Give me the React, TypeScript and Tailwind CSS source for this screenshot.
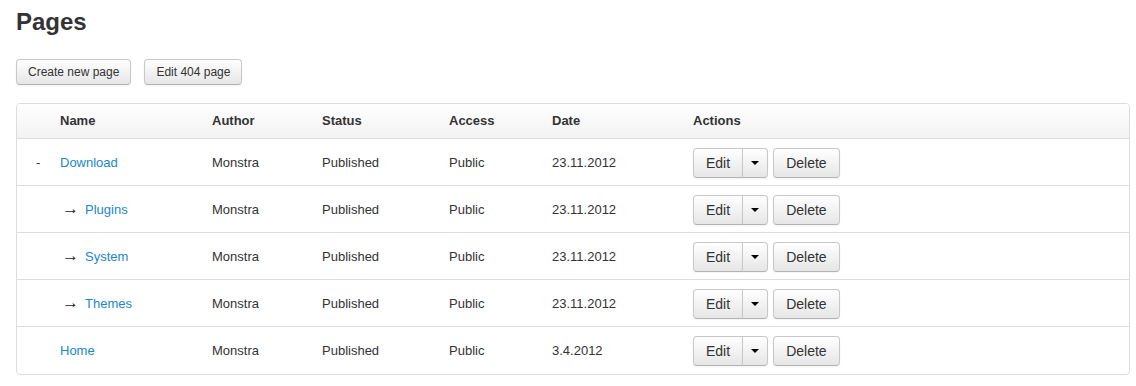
import { useState } from "react";

type PageRow = {
  name: string;
  level: "root" | "parent" | "child";
  author: string;
  status: string;
  access: string;
  date: string;
};

const pages: PageRow[] = [
  { name: "Download", level: "parent", author: "Monstra", status: "Published", access: "Public", date: "23.11.2012" },
  { name: "Plugins", level: "child", author: "Monstra", status: "Published", access: "Public", date: "23.11.2012" },
  { name: "System", level: "child", author: "Monstra", status: "Published", access: "Public", date: "23.11.2012" },
  { name: "Themes", level: "child", author: "Monstra", status: "Published", access: "Public", date: "23.11.2012" },
  { name: "Home", level: "root", author: "Monstra", status: "Published", access: "Public", date: "3.4.2012" },
];

const cols = "grid grid-cols-[35px_152px_110px_127px_103px_141px_1fr]";

const btn =
  "border border-[#c8c8c8] border-b-[#b3b3b3] bg-gradient-to-b from-white to-[#e6e6e6] text-[#333] shadow-[inset_0_1px_0_rgba(255,255,255,0.2),0_1px_2px_rgba(0,0,0,0.05)]";

function SmallButton({ label }: { label: string }) {
  return (
    <button
      type="button"
      className={`${btn} h-[26px] rounded-[4px] px-[11px] text-[12px] leading-[20px]`}
    >
      {label}
    </button>
  );
}

function RowActions() {
  const [open, setOpen] = useState(false);
  return (
    <div className="flex items-center gap-[5px]">
      <div className="flex">
        <button
          type="button"
          className={`${btn} h-[30px] rounded-l-[4px] px-[12px] text-[14px] leading-[20px]`}
        >
          Edit
        </button>
        <button
          type="button"
          onClick={() => setOpen((v) => !v)}
          aria-expanded={open}
          className={`${btn} -ml-px flex h-[30px] w-[26px] items-center justify-center rounded-r-[4px]`}
        >
          <span className="block h-0 w-0 border-x-[4px] border-t-[4px] border-x-transparent border-t-black" />
        </button>
      </div>
      <button
        type="button"
        className={`${btn} h-[30px] rounded-[4px] px-[12px] text-[14px] leading-[20px]`}
      >
        Delete
      </button>
    </div>
  );
}

export default function App() {
  return (
    <div className="bg-white pl-4 pr-[6px] pt-[7px] font-['Liberation_Sans',Arial,sans-serif] text-[13px] text-[#333]">
      <h2 className="text-[24px] font-bold leading-[30px]">Pages</h2>

      <div className="mt-[22px] flex gap-[13px]">
        <SmallButton label="Create new page" />
        <SmallButton label="Edit 404 page" />
      </div>

      <div className="mt-[18px] overflow-hidden rounded-[4px] border border-[#dddddd]">
        <div
          className={`${cols} h-[35px] items-center border-b border-[#dddddd] bg-gradient-to-b from-white to-[#f2f2f2] font-bold`}
        >
          <span />
          <span className="px-2">Name</span>
          <span className="px-2">Author</span>
          <span className="px-2">Status</span>
          <span className="px-2">Access</span>
          <span className="px-2">Date</span>
          <span className="px-2">Actions</span>
        </div>

        {pages.map((page, i) => (
          <div
            key={page.name}
            className={`${cols} h-[47px] items-center pt-px ${
              i < pages.length - 1 ? "border-b border-[#dddddd]" : ""
            }`}
          >
            <span className="pl-[19px]">{page.level === "parent" ? "-" : ""}</span>
            <span className="block px-2 leading-[18px]">
              {page.level === "child" && (
                <span className="ml-[2px] mr-[6px] text-[17px] leading-[0] text-[#222]">→</span>
              )}
              <a href="#" className="text-[#1b86cf]">
                {page.name}
              </a>
            </span>
            <span className="px-2">{page.author}</span>
            <span className="px-2">{page.status}</span>
            <span className="px-2">{page.access}</span>
            <span className="px-2">{page.date}</span>
            <span className="px-2">
              <RowActions />
            </span>
          </div>
        ))}
      </div>
    </div>
  );
}
